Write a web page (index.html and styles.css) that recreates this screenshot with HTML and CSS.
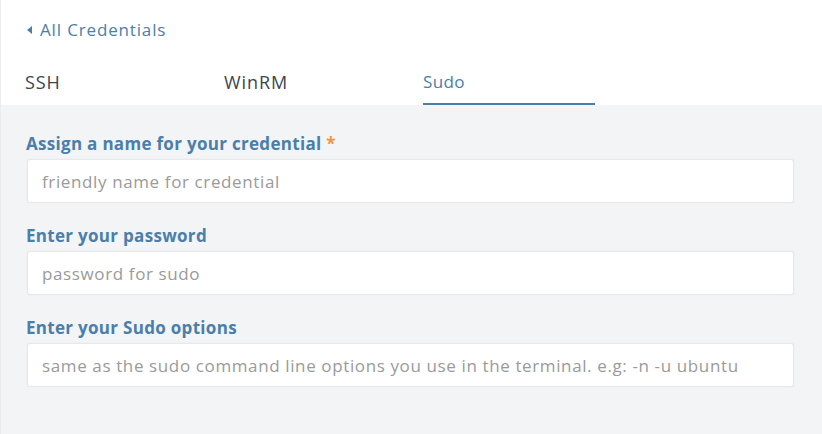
FILE: index.html
```html
<!DOCTYPE html>
<html>
<head>
<meta charset="utf-8">
<link rel="stylesheet" href="styles.css">
</head>
<body>
<div class="panel">
  <div class="top">
    <a class="back"><span class="caret"></span>All Credentials</a>
    <nav class="tabs">
      <div class="tab">SSH</div>
      <div class="tab">WinRM</div>
      <div class="tab active">Sudo</div>
    </nav>
  </div>
  <form class="form">
    <div class="field">
      <label class="label">Assign a name for your credential <span class="req">*</span></label>
      <input class="input" type="text" placeholder="friendly name for credential">
    </div>
    <div class="field">
      <label class="label">Enter your password</label>
      <input class="input" type="text" placeholder="password for sudo">
    </div>
    <div class="field">
      <label class="label">Enter your Sudo options</label>
      <input class="input" type="text" placeholder="same as the sudo command line options you use in the terminal. e.g: -n -u ubuntu">
    </div>
  </form>
</div>
</body>
</html>
```

FILE: styles.css
```css
* { box-sizing: border-box; }
html, body { margin: 0; padding: 0; }
body {
  width: 822px;
  height: 434px;
  overflow: hidden;
  font-family: "Open Sans", Lato, sans-serif;
  background: #f3f4f6;
}
.panel {
  height: 434px;
  display: flex;
  flex-direction: column;
  border-left: 1px solid #ececec;
}
.top {
  background: #fff;
  padding: 19px 0 0 24px;
}
.back {
  display: flex;
  align-items: center;
  color: #4a7eab;
  font-size: 17px;
  line-height: 22px;
  height: 22px;
  letter-spacing: 0.85px;
}
.caret {
  width: 0;
  height: 0;
  border-top: 4px solid transparent;
  border-bottom: 4px solid transparent;
  border-right: 5px solid #4a7eab;
  margin: 0 8px 0 2px;
}
.tabs {
  display: flex;
  gap: 27px;
  margin-top: 30px;
}
.tab {
  width: 172px;
  font-size: 18px;
  color: #3b4550;
  line-height: 22px;
  letter-spacing: 0.9px;
  padding: 0 0 10px 0;
  border-bottom: 2px solid transparent;
}
.tab.active {
  color: #4a7eab;
  border-bottom-color: #4a7eab;
  font-size: 17px;
  letter-spacing: 0.4px;
}
.form {
  flex: 1;
  padding: 29px 28px 0 26px;
  display: flex;
  flex-direction: column;
  gap: 23px;
}
.field {
  display: flex;
  flex-direction: column;
  gap: 5px;
}
.label {
  color: #4a7eab;
  font-weight: 700;
  font-size: 17px;
  line-height: 20px;
  margin-left: -1px;
  letter-spacing: 0.3px;
}
.req { color: #f0963e; }
.input {
  height: 44px;
  width: 767px;
  border: 1px solid #e6e8eb;
  border-radius: 3px;
  background: #fff;
  box-shadow: 0 0 2px rgba(0,0,0,0.06);
  padding: 0 14px;
  font-family: "Open Sans", sans-serif;
  font-size: 17px;
  letter-spacing: 0.62px;
  outline: none;
}
.input::placeholder { color: #9a9a9a; }
```
